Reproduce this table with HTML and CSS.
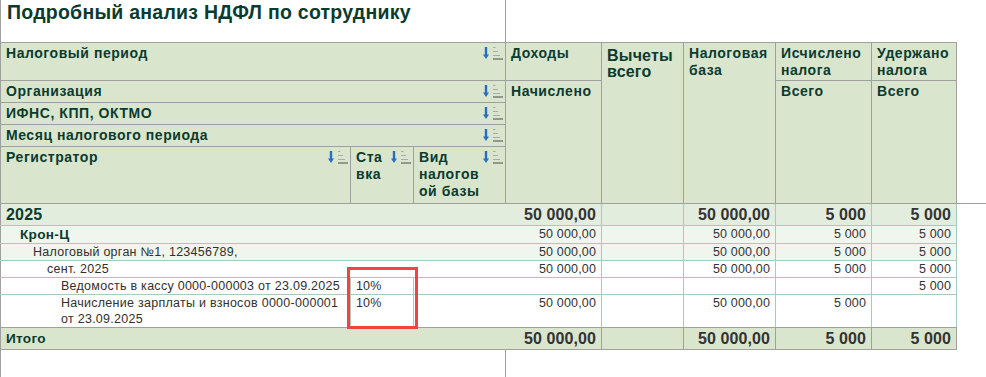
FILE: index.html
```html
<!DOCTYPE html>
<html lang="ru">
<head>
<meta charset="utf-8">
<title>Подробный анализ НДФЛ по сотруднику</title>
<link rel="stylesheet" href="styles.css">
</head>
<body>
<div class="sheet">
<table class="report">
  <colgroup>
    <col class="w-reg"><col class="w-rate"><col class="w-kind"><col class="w-inc"><col class="w-ded"><col class="w-base"><col class="w-calc"><col class="w-held"><col class="w-pad">
  </colgroup>
  <tr class="title-row">
    <td colspan="3" class="title">Подробный анализ НДФЛ по сотруднику</td>
    <td colspan="6" class="blank"></td>
  </tr>
  <tr class="h h1">
    <th colspan="3"><div class="hc"><span>Налоговый период</span><svg class="sort" width="20" height="13" viewBox="0 0 20 13"><path d="M1.8 0h2.4v7.5h1.8l-3 4.5-3-4.5h1.8z" fill="#2a6fbf"/><path d="M10 0.5h2.5M10 4.5h5M10 8.5h7" stroke="#aaa" fill="none"/><path d="M10 12h10" stroke="#4a4a4a" fill="none"/></svg></div></th>
    <th>Доходы</th>
    <th rowspan="5" class="big">Вычеты всего</th>
    <th rowspan="5">Налоговая база</th>
    <th>Исчислено налога</th>
    <th>Удержано налога</th>
    <td rowspan="5" class="blank"></td>
  </tr>
  <tr class="h h2">
    <th colspan="3"><div class="hc"><span>Организация</span><svg class="sort" width="20" height="13" viewBox="0 0 20 13"><path d="M1.8 0h2.4v7.5h1.8l-3 4.5-3-4.5h1.8z" fill="#2a6fbf"/><path d="M10 0.5h2.5M10 4.5h5M10 8.5h7" stroke="#aaa" fill="none"/><path d="M10 12h10" stroke="#4a4a4a" fill="none"/></svg></div></th>
    <th rowspan="4">Начислено</th>
    <th rowspan="4">Всего</th>
    <th rowspan="4">Всего</th>
  </tr>
  <tr class="h h3">
    <th colspan="3"><div class="hc"><span>ИФНС, КПП, ОКТМО</span><svg class="sort" width="20" height="13" viewBox="0 0 20 13"><path d="M1.8 0h2.4v7.5h1.8l-3 4.5-3-4.5h1.8z" fill="#2a6fbf"/><path d="M10 0.5h2.5M10 4.5h5M10 8.5h7" stroke="#aaa" fill="none"/><path d="M10 12h10" stroke="#4a4a4a" fill="none"/></svg></div></th>
  </tr>
  <tr class="h h4">
    <th colspan="3"><div class="hc"><span>Месяц налогового периода</span><svg class="sort" width="20" height="13" viewBox="0 0 20 13"><path d="M1.8 0h2.4v7.5h1.8l-3 4.5-3-4.5h1.8z" fill="#2a6fbf"/><path d="M10 0.5h2.5M10 4.5h5M10 8.5h7" stroke="#aaa" fill="none"/><path d="M10 12h10" stroke="#4a4a4a" fill="none"/></svg></div></th>
  </tr>
  <tr class="h h5">
    <th><div class="hc"><span>Регистратор</span><svg class="sort" width="20" height="13" viewBox="0 0 20 13"><path d="M1.8 0h2.4v7.5h1.8l-3 4.5-3-4.5h1.8z" fill="#2a6fbf"/><path d="M10 0.5h2.5M10 4.5h5M10 8.5h7" stroke="#aaa" fill="none"/><path d="M10 12h10" stroke="#4a4a4a" fill="none"/></svg></div></th>
    <th><div class="hc"><span class="narrow">Ста<wbr>вка</span><svg class="sort" width="20" height="13" viewBox="0 0 20 13"><path d="M1.8 0h2.4v7.5h1.8l-3 4.5-3-4.5h1.8z" fill="#2a6fbf"/><path d="M10 0.5h2.5M10 4.5h5M10 8.5h7" stroke="#aaa" fill="none"/><path d="M10 12h10" stroke="#4a4a4a" fill="none"/></svg></div></th>
    <th><div class="hc"><span class="kind">Вид налогов<wbr>ой базы</span><svg class="sort" width="20" height="13" viewBox="0 0 20 13"><path d="M1.8 0h2.4v7.5h1.8l-3 4.5-3-4.5h1.8z" fill="#2a6fbf"/><path d="M10 0.5h2.5M10 4.5h5M10 8.5h7" stroke="#aaa" fill="none"/><path d="M10 12h10" stroke="#4a4a4a" fill="none"/></svg></div></th>
  </tr>
  <tr class="d y2025">
    <td colspan="3" class="lbl lv0">2025</td>
    <td class="n">50 000,00</td><td class="n"></td><td class="n">50 000,00</td><td class="n">5 000</td><td class="n">5 000</td>
    <td class="edge"></td>
  </tr>
  <tr class="d org">
    <td colspan="3" class="lbl lv1">Крон-Ц</td>
    <td class="n">50 000,00</td><td class="n"></td><td class="n">50 000,00</td><td class="n">5 000</td><td class="n">5 000</td>
    <td class="blank"></td>
  </tr>
  <tr class="d ifns">
    <td colspan="3" class="lbl lv2">Налоговый орган №1, 123456789,</td>
    <td class="n">50 000,00</td><td class="n"></td><td class="n">50 000,00</td><td class="n">5 000</td><td class="n">5 000</td>
    <td class="blank"></td>
  </tr>
  <tr class="d month">
    <td colspan="3" class="lbl lv3">сент. 2025</td>
    <td class="n">50 000,00</td><td class="n"></td><td class="n">50 000,00</td><td class="n">5 000</td><td class="n">5 000</td>
    <td class="blank"></td>
  </tr>
  <tr class="d doc">
    <td class="lbl lv4 split">Ведомость в кассу 0000-000003 от 23.09.2025</td>
    <td class="rate">10%</td><td class="kindc"></td>
    <td class="n"></td><td class="n"></td><td class="n"></td><td class="n"></td><td class="n">5 000</td>
    <td class="blank"></td>
  </tr>
  <tr class="d doc last">
    <td class="lbl lv4 split">Начисление зарплаты и взносов 0000-000001<br>от 23.09.2025</td>
    <td class="rate">10%</td><td class="kindc"></td>
    <td class="n">50 000,00</td><td class="n"></td><td class="n">50 000,00</td><td class="n">5 000</td><td class="n"></td>
    <td class="blank"></td>
  </tr>
  <tr class="d total">
    <td colspan="3" class="lbl lv0">Итого</td>
    <td class="n">50 000,00</td><td class="n"></td><td class="n">50 000,00</td><td class="n">5 000</td><td class="n">5 000</td>
    <td class="blank"></td>
  </tr>
  <tr class="filler">
    <td colspan="3" class="fill"></td>
    <td colspan="6" class="blank"></td>
  </tr>
</table>
<div class="mark"></div>
</div>
</body>
</html>
```

FILE: styles.css
```css
* { box-sizing: border-box; }
html, body { margin: 0; padding: 0; background: #ffffff; overflow: hidden; }
body { font-family: "Liberation Sans", Arial, sans-serif; color: #333333; }

.sheet { position: relative; width: 986px; }

.report { border-collapse: collapse; table-layout: fixed; width: 986px; }
.w-reg { width: 350px; }
.w-rate { width: 63px; }
.w-kind { width: 92px; }
.w-inc { width: 96px; }
.w-ded { width: 82px; }
.w-base { width: 92px; }
.w-calc { width: 96px; }
.w-held { width: 85px; }
.w-pad { width: 30px; }

td, th { padding: 0; vertical-align: top; }
.blank { border: none; }

/* title */
.title-row { height: 42px; }
.title {
  border-left: 1px solid #a0a0a0;
  border-right: 1px solid #a0a0a0;
  padding: 1px 6px 0;
  font-size: 19.5px;
  line-height: 22px;
  letter-spacing: 0.25px;
  font-weight: bold;
  color: #0b3b2e;
  white-space: nowrap;
}

/* header */
.h th {
  background: #dae5ce;
  border: 1px solid #a0a0a0;
  color: #0b3b2e;
  font-size: 14px;
  line-height: 17px;
  letter-spacing: 0.55px;
  font-weight: bold;
  text-align: left;
  padding: 2px 2px 0 5px;
}
.h th.big { font-size: 16px; line-height: 16px; letter-spacing: 0.2px; padding-top: 5px; }
.h1 { height: 38px; }
.h2, .h3, .h4 { height: 22px; }
.h5 { height: 57px; }

.hc { display: flex; justify-content: space-between; align-items: flex-start; gap: 2px; }
.sort { flex: none; margin-top: 2px; display: block; }
.narrow { width: 30px; }
.kind { width: 64px; }

/* data */
.d td {
  font-size: 12.5px;
  line-height: 16px;
  letter-spacing: 0.16px;
  padding: 0 5px 0 5px;
  border-bottom: 1px solid #a9c8be;
}
.d td.blank { border: none; }
.d .n { text-align: right; border-right: 1px solid #a9c8be; white-space: nowrap; }
.d .lbl { border-left: 1px solid #a0a0a0; color: #33302c; white-space: nowrap; letter-spacing: 0.27px; }
.d .split { border-right: 1px solid #a9c8be; }
.d .rate { border-right: 1px solid #a9c8be; padding-left: 5px; color: #33302c; }

.lv0 { padding-left: 5px !important; }
.lv1 { padding-left: 19px !important; }
.lv2 { padding-left: 32px !important; }
.lv3 { padding-left: 46px !important; }
.lv4 { padding-left: 60px !important; }

.y2025 td { background: #e3eddd; }
.y2025 td.edge { background: none; border: none; border-top: 1px solid #a0a0a0; }
.y2025 .lbl { font-size: 16px; line-height: 20px; padding-top: 1px; font-weight: bold; color: #0b3b2e; letter-spacing: 0.2px; }
.y2025 .n { font-size: 16px; line-height: 20px; padding-top: 1px; font-weight: bold; letter-spacing: 0.1px; }

.org td:not(.blank), .ifns td:not(.blank) { background: #f0f5ed; }
.org .lbl { font-size: 13.6px; line-height: 17px; font-weight: bold; color: #0b3b2e; letter-spacing: 0.3px; }
.org .n { line-height: 17px; }

.last td:not(.blank) { border-bottom-color: #a0a0a0; }

.total td:not(.blank) { background: #dae5ce; border-bottom: 1px solid #a0a0a0; }
.total .lbl { font-size: 13.6px; line-height: 21px; font-weight: bold; color: #0b3b2e; letter-spacing: 0.3px; }
.total .n { font-size: 16px; line-height: 21px; font-weight: bold; letter-spacing: 0.1px; border-right-color: #a0a0a0; }

.filler { height: 40px; }
.fill { border-left: 1px solid #a0a0a0; border-right: 1px solid #a0a0a0; }

/* highlight annotation */
.mark {
  position: absolute;
  left: 347px;
  top: 267px;
  width: 71px;
  height: 62px;
  border: 3px solid #ee4444;
}
```
